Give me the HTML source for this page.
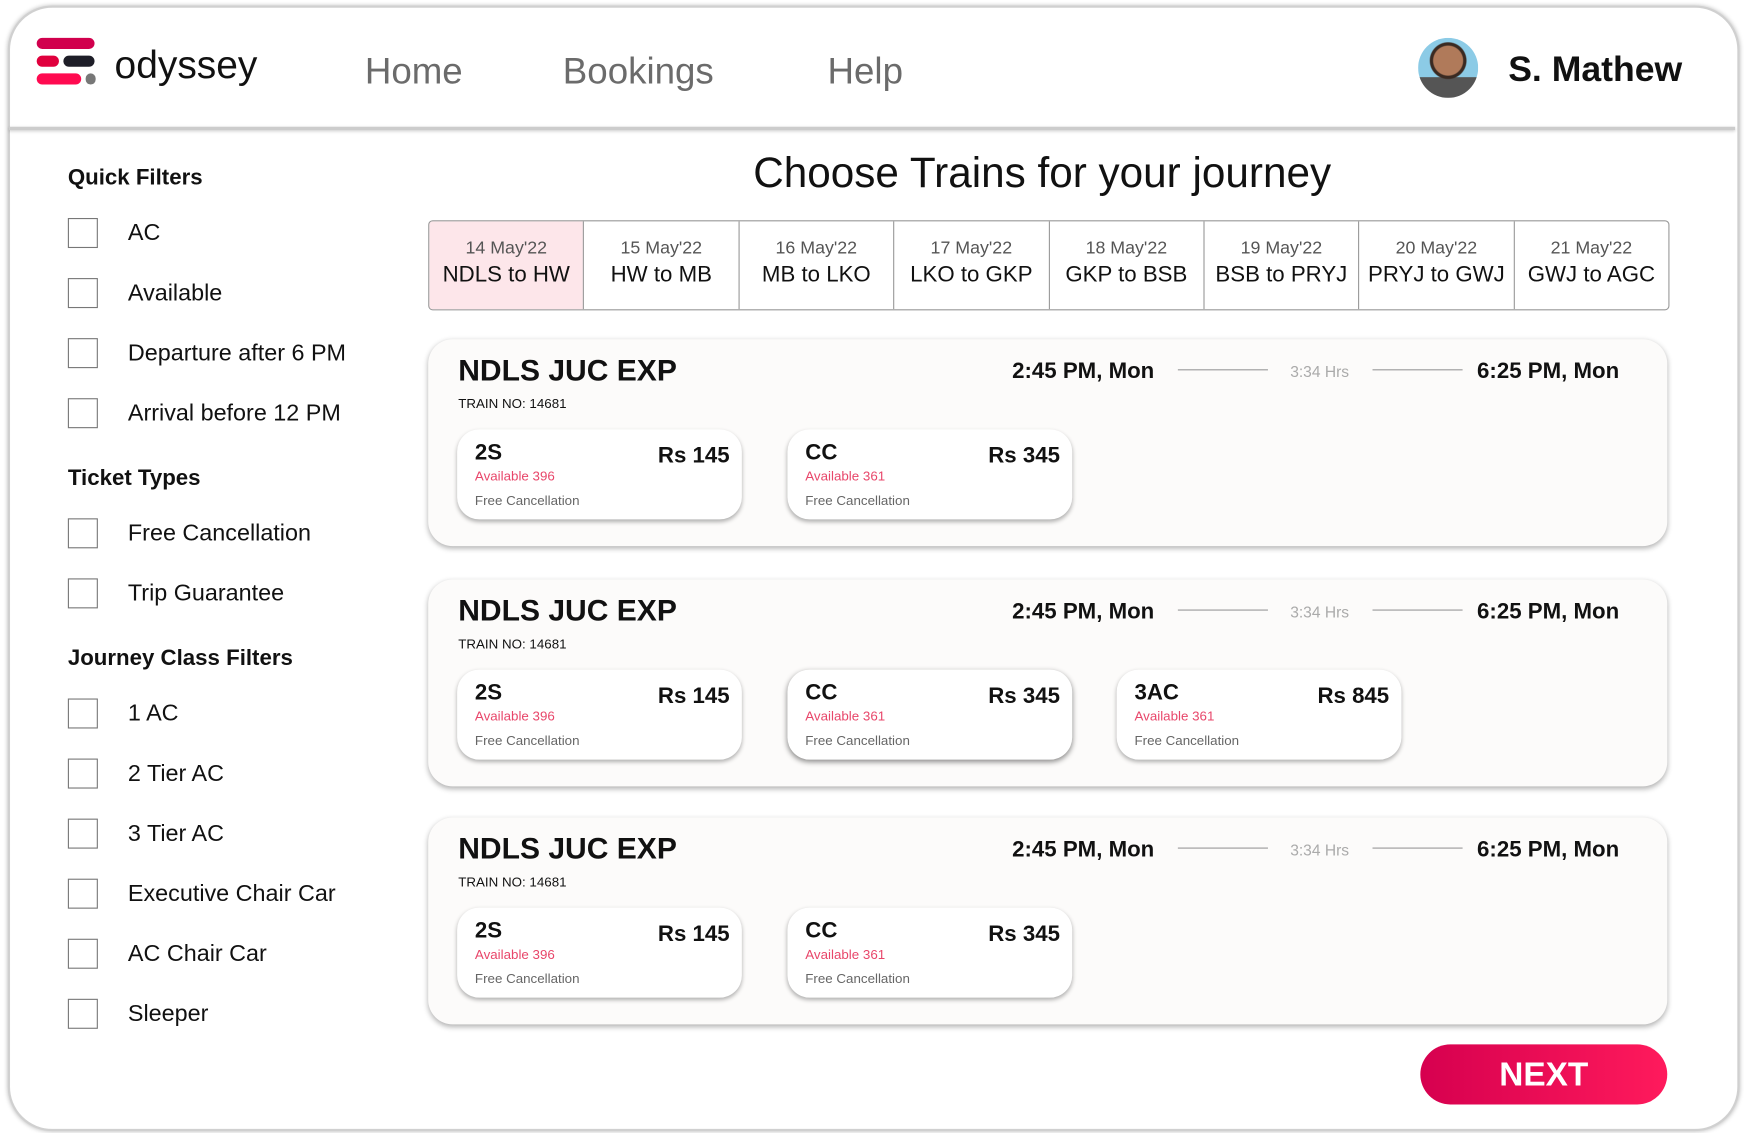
<!DOCTYPE html>
<html><head><meta charset="utf-8"><style>
html,body{margin:0;padding:0;background:#fff;width:1744px;height:1133px;overflow:hidden}
#w{position:absolute;left:0;top:0;width:1568px;height:1019px;transform:scale(1.11224);transform-origin:0 0;font-family:"Liberation Sans","DejaVu Sans",sans-serif;color:#111}
.a{position:absolute;white-space:nowrap}
.frame{position:absolute;left:7px;top:5px;width:1553px;height:1008px;border-radius:40px;border:2px solid #d0d0d0;box-shadow:0 0 4px rgba(0,0,0,.25);background:#fff}
.hdr{position:absolute;left:8px;top:114px;width:1552px;height:3px;background:#ccc;box-shadow:0 1px 3px rgba(0,0,0,.2)}
.nav{font-size:33px;color:#6b6b6b;top:45px}
.cb{position:absolute;left:61px;width:25px;height:25px;border:1.5px solid #777;background:#fff}
.lab{font-size:21px;left:115px}
.sh{font-size:20px;font-weight:bold;left:61px}
.tabs{position:absolute;left:385px;top:198px;width:1114px;height:79px;border:1px solid #999;border-radius:4px;display:flex;overflow:hidden}
.tab{flex:1;border-left:1px solid #999;text-align:center;padding-top:16px;box-sizing:border-box}
.tab:first-child{border-left:none;background:#fde6ea}
.tab .d{font-size:16px;color:#555}
.tab .r{font-size:20px;margin-top:3px}
.card{position:absolute;left:385px;width:1114px;height:186px;border-radius:22px;background:#fcfbfa;box-shadow:0 2px 5px rgba(0,0,0,.3)}
.card .t{position:absolute;left:27px;top:13px;font-size:27px;font-weight:bold}
.card .n{position:absolute;left:27px;top:51px;font-size:12px}
.tm{position:absolute;top:18px;font-size:20px;font-weight:bold}
.ln{position:absolute;top:27px;height:1px;background:#999;width:81px}
.hr{position:absolute;left:775px;top:21px;font-size:14px;color:#aaa}
.sc{position:absolute;top:81px;width:256px;height:81px;border-radius:20px;background:#fff;box-shadow:0 2px 4px rgba(0,0,0,.3)}
.sc .c{position:absolute;left:16px;top:10px;font-size:20px;font-weight:bold}
.sc .p{position:absolute;right:11px;top:13px;font-size:20px;font-weight:bold}
.sc .av{position:absolute;left:16px;top:35px;font-size:12px;color:#e8466a}
.sc .fc{position:absolute;left:16px;top:57px;font-size:12px;color:#666}
</style></head><body><div id="w">
<div class="frame"></div>
<div class="hdr"></div>
<div class="a" style="left:33px;top:34px;width:52px;height:10px;border-radius:5px;background:#d1004d"></div>
<div class="a" style="left:33px;top:50px;width:20px;height:10px;border-radius:5px;background:#e0003d"></div>
<div class="a" style="left:57px;top:50px;width:28px;height:10px;border-radius:5px;background:#1e1e28"></div>
<div class="a" style="left:33px;top:66px;width:40px;height:10px;border-radius:5px;background:#ff0a50"></div>
<div class="a" style="left:77px;top:66px;width:9px;height:10px;border-radius:5px;background:#777"></div>
<div class="a" style="left:103px;top:39px;font-size:35px;color:#111">odyssey</div>
<div class="a nav" style="left:328px">Home</div>
<div class="a nav" style="left:506px">Bookings</div>
<div class="a nav" style="left:744px">Help</div>
<div class="a" style="left:1275px;top:34px;width:54px;height:54px;border-radius:50%;background:radial-gradient(circle at 50% 38%,#b07a5a 0 13px,#3a2a22 14px 16px,transparent 17px),linear-gradient(#8ccbe6 0 65%,#555 66%)"></div>
<div class="a" style="left:1356px;top:44px;font-size:32px;font-weight:bold;color:#111">S. Mathew</div>

<div class="a sh" style="top:149px">Quick Filters</div>
<div class="cb" style="top:196px"></div><div class="a lab" style="top:198px">AC</div>
<div class="cb" style="top:250px"></div><div class="a lab" style="top:252px">Available</div>
<div class="cb" style="top:304px"></div><div class="a lab" style="top:306px">Departure after 6 PM</div>
<div class="cb" style="top:358px"></div><div class="a lab" style="top:360px">Arrival before 12 PM</div>
<div class="a sh" style="top:419px">Ticket Types</div>
<div class="cb" style="top:466px"></div><div class="a lab" style="top:468px">Free Cancellation</div>
<div class="cb" style="top:520px"></div><div class="a lab" style="top:522px">Trip Guarantee</div>
<div class="a sh" style="top:581px">Journey Class Filters</div>
<div class="cb" style="top:628px"></div><div class="a lab" style="top:630px">1 AC</div>
<div class="cb" style="top:682px"></div><div class="a lab" style="top:684px">2 Tier AC</div>
<div class="cb" style="top:736px"></div><div class="a lab" style="top:738px">3 Tier AC</div>
<div class="cb" style="top:790px"></div><div class="a lab" style="top:792px">Executive Chair Car</div>
<div class="cb" style="top:844px"></div><div class="a lab" style="top:846px">AC Chair Car</div>
<div class="cb" style="top:898px"></div><div class="a lab" style="top:900px">Sleeper</div>

<div class="a" style="left:380px;width:1114px;text-align:center;top:135px;font-size:38px">Choose Trains for your journey</div>
<div class="tabs">
<div class="tab"><div class="d">14 May'22</div><div class="r">NDLS to HW</div></div>
<div class="tab"><div class="d">15 May'22</div><div class="r">HW to MB</div></div>
<div class="tab"><div class="d">16 May'22</div><div class="r">MB to LKO</div></div>
<div class="tab"><div class="d">17 May'22</div><div class="r">LKO to GKP</div></div>
<div class="tab"><div class="d">18 May'22</div><div class="r">GKP to BSB</div></div>
<div class="tab"><div class="d">19 May'22</div><div class="r">BSB to PRYJ</div></div>
<div class="tab"><div class="d">20 May'22</div><div class="r">PRYJ to GWJ</div></div>
<div class="tab"><div class="d">21 May'22</div><div class="r">GWJ to AGC</div></div>
</div>

<div class="card" style="top:305px">
<div class="t">NDLS JUC EXP</div><div class="n">TRAIN NO: 14681</div>
<div class="tm" style="left:525px">2:45 PM, Mon</div><div class="ln" style="left:674px"></div><div class="hr">3:34 Hrs</div><div class="ln" style="left:849px"></div><div class="tm" style="left:943px">6:25 PM, Mon</div>
<div class="sc" style="left:26px"><div class="c">2S</div><div class="p">Rs 145</div><div class="av">Available 396</div><div class="fc">Free Cancellation</div></div>
<div class="sc" style="left:323px"><div class="c">CC</div><div class="p">Rs 345</div><div class="av">Available 361</div><div class="fc">Free Cancellation</div></div>
</div>
<div class="card" style="top:521px">
<div class="t">NDLS JUC EXP</div><div class="n">TRAIN NO: 14681</div>
<div class="tm" style="left:525px">2:45 PM, Mon</div><div class="ln" style="left:674px"></div><div class="hr">3:34 Hrs</div><div class="ln" style="left:849px"></div><div class="tm" style="left:943px">6:25 PM, Mon</div>
<div class="sc" style="left:26px"><div class="c">2S</div><div class="p">Rs 145</div><div class="av">Available 396</div><div class="fc">Free Cancellation</div></div>
<div class="sc" style="left:323px;box-shadow:0 2px 5px rgba(0,0,0,.45)"><div class="c">CC</div><div class="p">Rs 345</div><div class="av">Available 361</div><div class="fc">Free Cancellation</div></div>
<div class="sc" style="left:619px"><div class="c">3AC</div><div class="p">Rs 845</div><div class="av">Available 361</div><div class="fc">Free Cancellation</div></div>
</div>
<div class="card" style="top:735px">
<div class="t">NDLS JUC EXP</div><div class="n">TRAIN NO: 14681</div>
<div class="tm" style="left:525px">2:45 PM, Mon</div><div class="ln" style="left:674px"></div><div class="hr">3:34 Hrs</div><div class="ln" style="left:849px"></div><div class="tm" style="left:943px">6:25 PM, Mon</div>
<div class="sc" style="left:26px"><div class="c">2S</div><div class="p">Rs 145</div><div class="av">Available 396</div><div class="fc">Free Cancellation</div></div>
<div class="sc" style="left:323px"><div class="c">CC</div><div class="p">Rs 345</div><div class="av">Available 361</div><div class="fc">Free Cancellation</div></div>
</div>

<div class="a" style="left:1277px;top:939px;width:222px;height:54px;border-radius:27px;background:linear-gradient(90deg,#d6004f,#ff1a5c);color:#fff;font-size:30px;font-weight:bold;text-align:center;line-height:56px">NEXT</div>
</div></body></html>
